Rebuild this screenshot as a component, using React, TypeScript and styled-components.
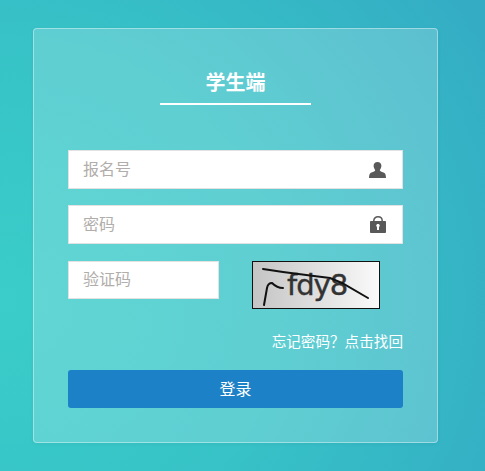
import styled, { createGlobalStyle } from "styled-components";

const GlobalStyle = createGlobalStyle`
  html, body {
    margin: 0;
    padding: 0;
    height: 100%;
  }

  body {
    font-family: "Noto Sans CJK SC", "Liberation Sans", sans-serif;
  }
`;

const Page = styled.div`
  box-sizing: border-box;
  width: 485px;
  height: 471px;
  padding: 28px 47px 28px 33px;
  overflow: hidden;
  background: radial-gradient(
    ellipse 560px 520px at 0px 300px,
    #3acdc9 0%,
    #37c3c7 50%,
    #34adc4 100%
  );
`;

const Card = styled.form`
  box-sizing: border-box;
  display: flex;
  flex-direction: column;
  width: 405px;
  height: 415px;
  padding: 39px 34px 0;
  border: 1px solid rgba(255, 255, 255, 0.4);
  border-radius: 4px;
  background: rgba(255, 255, 255, 0.2);
  box-shadow: 0 1px 4px rgba(0, 0, 0, 0.05);
`;

const Title = styled.h1`
  align-self: center;
  box-sizing: border-box;
  width: 151px;
  height: 37px;
  margin: 0 0 45px;
  border-bottom: 2px solid #fff;
  font-size: 20px;
  font-weight: 700;
  line-height: 28px;
  text-align: center;
  color: #fff;
`;

const Field = styled.div`
  box-sizing: border-box;
  display: flex;
  align-items: center;
  justify-content: space-between;
  width: ${({ $width }: { $width: number }) => $width}px;
  height: 39px;
  padding: 0 16px 0 14px;
  margin-bottom: 16px;
  border: 1px solid #e2e2e2;
  background: #fff;
`;

const Placeholder = styled.span`
  margin-bottom: 4px;
  font-size: 16px;
  color: #b0adaa;
`;

const CaptchaRow = styled.div`
  display: flex;
  align-items: flex-start;
  gap: 33px;
  height: 48px;
  margin-top: 1px;
`;

const CaptchaField = styled(Field)`
  height: 38px;
  margin-bottom: 0;
`;

const CaptchaImage = styled.svg`
  display: block;
  flex: none;
`;

const Forgot = styled.a`
  align-self: flex-end;
  margin-top: 20px;
  font-size: 14.6px;
  line-height: 24px;
  color: #fff;
  cursor: pointer;
`;

const Submit = styled.button`
  width: 335px;
  height: 38px;
  margin-top: 17px;
  padding: 0 0 3px;
  border: none;
  border-radius: 3px;
  font-family: inherit;
  font-size: 16px;
  color: #fff;
  background: #1c81c6;
  cursor: pointer;
`;

const UserIcon = () => (
  <svg width="17" height="16" viewBox="0 0 17 16">
    <path
      fill="#595959"
      d="M4.600 3.800C4.600 1.500 6.200 0 8.500 0s3.900 1.500 3.900 3.800c0 1.500-.6 2.800-1.300 3.700-.4.500-.4 1 .1 1.400 1.500 1 3.900 1.500 4.800 2.600.6.800.9 2.500 1 4.500H0c.1-2 .4-3.700 1-4.500.9-1.100 3.300-1.600 4.800-2.600.5-.4.5-.9.1-1.400-.7-.9-1.300-2.200-1.300-3.700z"
    />
  </svg>
);

const LockIcon = () => (
  <svg width="16" height="17" viewBox="0 0 16 17">
    <path
      fill="none"
      stroke="#595959"
      strokeWidth="1.500"
      d="M3.800 6V4.800C3.800 2.300 5.600.8 8 .8s4.200 1.500 4.200 4V6"
    />
    <path
      fill="#595959"
      fillRule="evenodd"
      d="M.8 5h14.400c.4 0 .8.400.8.800v10.400c0 .4-.4.800-.8.800H.8c-.4 0-.8-.4-.8-.8V5.800C0 5.400.4 5 .8 5zM8 8c-1 0-1.800.7-1.800 1.600 0 .6.300 1.100.8 1.400v3h2v-3c.5-.3.800-.8.800-1.400C9.800 8.700 9 8 8 8z"
    />
  </svg>
);

const Captcha = () => (
  <CaptchaImage width="128" height="48" viewBox="0 0 128 48">
    <defs>
      <linearGradient id="captchaBg" x1="0" y1="0" x2="1" y2="0">
        <stop offset="0" stopColor="#c4c4c4" />
        <stop offset="1" stopColor="#fafafa" />
      </linearGradient>
    </defs>
    <rect x="0.5" y="0.5" width="127" height="47" fill="url(#captchaBg)" stroke="#111" />
    <text
      x="35"
      y="34"
      fontFamily="'DejaVu Sans', sans-serif"
      fontSize="29"
      letterSpacing="-1"
      fill="#333"
      stroke="#333"
      strokeWidth="0.4"
    >
      fdy8
    </text>
    <path
      fill="none"
      stroke="#111"
      strokeWidth="2"
      strokeLinecap="round"
      d="M11 8 L31 11 L62 15 L78 17 L90 22 L116 37"
    />
    <path
      fill="none"
      stroke="#111"
      strokeWidth="2"
      strokeLinecap="round"
      d="M12 44 L15 27 Q16 22 20 22 Q25 27 31 27"
    />
  </CaptchaImage>
);

export default function App() {
  return (
    <>
      <GlobalStyle />
      <Page>
        <Card>
          <Title>学生端</Title>
          <Field $width={335}>
            <Placeholder>报名号</Placeholder>
            <UserIcon />
          </Field>
          <Field $width={335}>
            <Placeholder>密码</Placeholder>
            <LockIcon />
          </Field>
          <CaptchaRow>
            <CaptchaField $width={151}>
              <Placeholder>验证码</Placeholder>
            </CaptchaField>
            <Captcha />
          </CaptchaRow>
          <Forgot>忘记密码？点击找回</Forgot>
          <Submit type="button">登录</Submit>
        </Card>
      </Page>
    </>
  );
}
